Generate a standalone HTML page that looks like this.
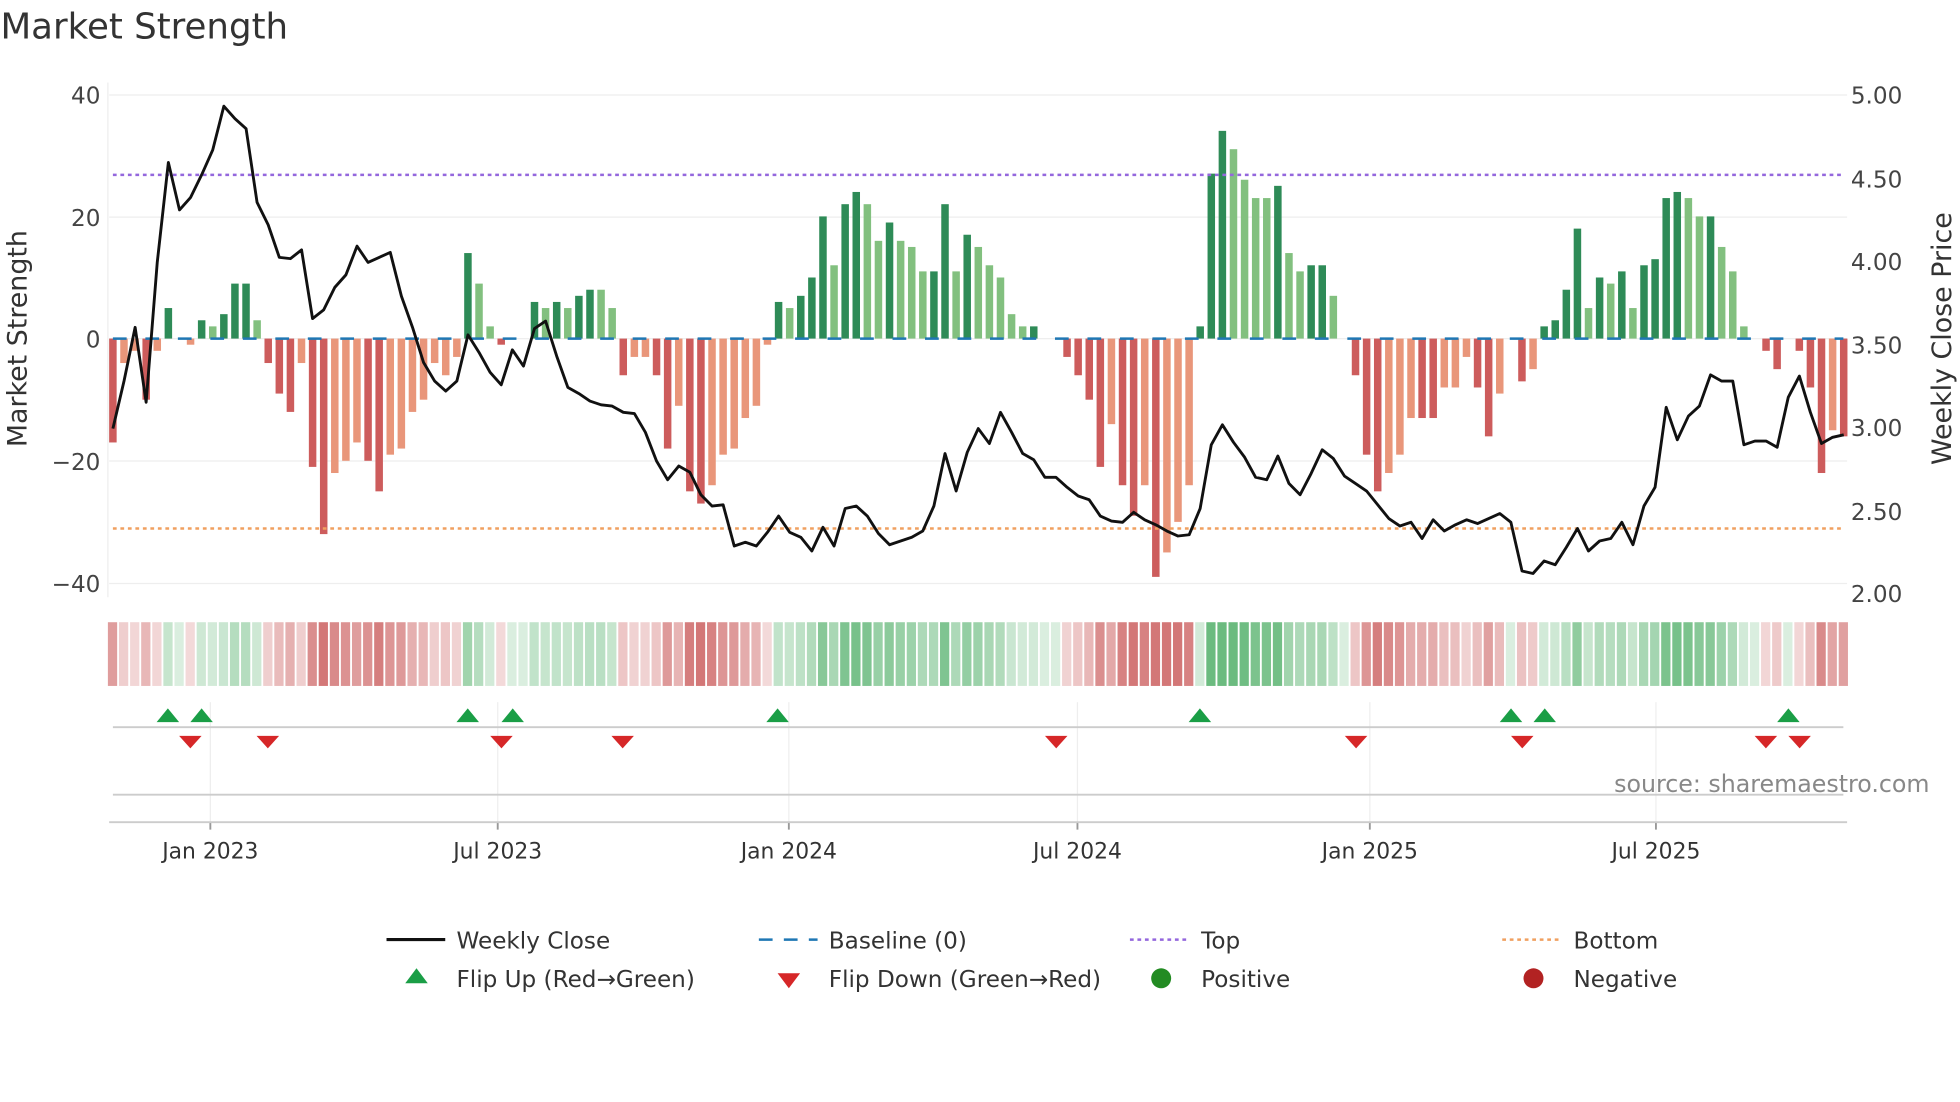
<!DOCTYPE html>
<html><head><meta charset="utf-8"><style>
html,body{margin:0;padding:0;background:#fff;}
svg{display:block;font-family:"DejaVu Sans","Liberation Sans",sans-serif;}
</style></head><body>
<svg id="s" width="1960" height="1102" viewBox="0 0 1568 882" xmlns="http://www.w3.org/2000/svg">
<rect width="1568" height="882" fill="#fff"/>
<text x="0" y="31" font-size="28.5" fill="#333">Market Strength</text>
<g id="grid"></g>
<g id="bars"></g>
<g id="heat"></g>
<g id="lines"></g>
<g fill="#444" font-size="18.5">
<text x="80" y="83" text-anchor="end">40</text>
<text x="80" y="181" text-anchor="end">20</text>
<text x="80" y="278" text-anchor="end">0</text>
<text x="80" y="376" text-anchor="end">−20</text>
<text x="80" y="474" text-anchor="end">−40</text>
<text x="1481" y="83">5.00</text>
<text x="1481" y="150">4.50</text>
<text x="1481" y="216">4.00</text>
<text x="1481" y="283">3.50</text>
<text x="1481" y="349">3.00</text>
<text x="1481" y="416">2.50</text>
<text x="1481" y="482">2.00</text>
</g>
<text transform="translate(21,271) rotate(-90)" text-anchor="middle" font-size="21.5" fill="#333">Market Strength</text>
<text transform="translate(1561,271) rotate(-90)" text-anchor="middle" font-size="21.5" fill="#333">Weekly Close Price</text>
<text x="1544" y="634" text-anchor="end" font-size="19" fill="#888">source: sharemaestro.com</text>
<g font-size="17.5" fill="#333" text-anchor="middle">
<text x="168" y="687">Jan 2023</text><text x="398" y="687">Jul 2023</text>
<text x="631" y="687">Jan 2024</text><text x="862" y="687">Jul 2024</text>
<text x="1096" y="687">Jan 2025</text><text x="1325" y="687">Jul 2025</text>
</g>
<g font-size="18.5" fill="#333">
<line x1="309" y1="752" x2="356" y2="752" stroke="#111" stroke-width="2.5"/>
<text x="365" y="759">Weekly Close</text>
<line x1="607" y1="752" x2="654" y2="752" stroke="#1f77b4" stroke-width="2" stroke-dasharray="11,9"/>
<text x="663" y="759">Baseline (0)</text>
<line x1="904" y1="752" x2="951" y2="752" stroke="#9467dd" stroke-width="2" stroke-dasharray="3,3"/>
<text x="961" y="759">Top</text>
<line x1="1202" y1="752" x2="1249" y2="752" stroke="#f0a060" stroke-width="2" stroke-dasharray="3,3"/>
<text x="1259" y="759">Bottom</text>
<path d="M324,787 L333,775 L342,787Z" fill="#1a9e46"/>
<text x="365" y="790">Flip Up (Red→Green)</text>
<path d="M622,779 L631,791 L640,779Z" fill="#d62728"/>
<text x="663" y="790">Flip Down (Green→Red)</text>
<circle cx="929" cy="783" r="8" fill="#228b22"/>
<text x="961" y="790">Positive</text>
<circle cx="1227" cy="783" r="8" fill="#b22222"/>
<text x="1259" y="790">Negative</text>
</g>
</svg>
<script>
var NS="http://www.w3.org/2000/svg";
function el(p,t,a){var e=document.createElementNS(NS,t);for(var k in a)e.setAttribute(k,a[k]);p.appendChild(e);return e;}
var v=[-17,-4,-2,-10,-2,5,0,-1,3,2,4,9,9,3,-4,-9,-12,-4,-21,-32,-22,-20,-17,-20,-25,-19,-18,-12,-10,-4,-6,-3,14,9,2,-1,0,0,6,5,6,5,7,8,8,5,-6,-3,-3,-6,-18,-11,-25,-27,-24,-19,-18,-13,-11,-1,6,5,7,10,20,12,22,24,22,16,19,16,15,11,11,22,11,17,15,12,10,4,2,2,0,0,-3,-6,-10,-21,-14,-24,-29,-24,-39,-35,-30,-24,2,27,34,31,26,23,23,25,14,11,12,12,7,0,-6,-19,-25,-22,-19,-13,-13,-13,-8,-8,-3,-8,-16,-9,0,-7,-5,2,3,8,18,5,10,9,11,5,12,13,23,24,23,20,20,15,11,2,0,-2,-5,0,-2,-8,-22,-15,-16];
var N=v.length,dx=8.88,x0=90;
var dark={};[90,117,134,161,179,188,197,214,223,232,250,259,294,303,374,401,428,446,463,472,499,525,534,552,561,622,640,649,658,676,685,712,747,756,774,827,854,863,872,880,898,907,925,960,969,978,1023,1049,1058,1085,1094,1103,1138,1147,1183,1192,1218,1236,1245,1254,1262,1280,1298,1316,1325,1333,1342,1369,1414,1423,1441,1449,1458,1476].forEach(function(x){dark[Math.round((x-x0)/dx)]=1;});
var g=document.getElementById("grid"),b=document.getElementById("bars"),h=document.getElementById("heat"),L=document.getElementById("lines");
[76,173.8,271,369,467].forEach(function(y){el(g,"line",{x1:87,x2:1478,y1:y,y2:y,stroke:"#eee","stroke-width":1});});
[168,398,631,862,1096,1325].forEach(function(x){el(g,"line",{x1:x,x2:x,y1:562,y2:658,stroke:"#eee","stroke-width":1});el(g,"line",{x1:x,x2:x,y1:658,y2:664,stroke:"#999","stroke-width":1.5});});
el(g,"line",{x1:86,x2:86,y1:66,y2:478,stroke:"#eee"});
el(g,"line",{x1:90,x2:1475,y1:582,y2:582,stroke:"#ccc","stroke-width":1.5});
el(g,"line",{x1:90,x2:1475,y1:636,y2:636,stroke:"#ccc","stroke-width":1.5});
el(g,"line",{x1:87,x2:1478,y1:658,y2:658,stroke:"#ccc","stroke-width":1.5});
for(var i=0;i<N;i++){var x=x0+i*dx,val=v[i],hh=Math.abs(val)*4.89,d=dark[i];
 var c=val>=0?(d?"#2e8b57":"#82c07f"):(d?"#cd5c5c":"#e9967a");
 if(val!=0)el(b,"rect",{x:x-3,y:val>0?271-hh:271,width:6,height:hh,fill:c});
 var a=Math.min(0.8,0.2+Math.abs(val)/45);
 el(h,"rect",{x:x-4,y:498,width:7.4,height:51,fill:val>=0?"rgb(70,170,95)":"rgb(200,85,85)","fill-opacity":a});
}
el(L,"line",{x1:90,x2:1475,y1:271,y2:271,stroke:"#1f77b4","stroke-width":2,"stroke-dasharray":"11,15"});
el(L,"line",{x1:90,x2:1475,y1:140,y2:140,stroke:"#9467dd","stroke-width":2,"stroke-dasharray":"3,3"});
el(L,"line",{x1:90,x2:1475,y1:423,y2:423,stroke:"#f0a060","stroke-width":2,"stroke-dasharray":"3,3"});
var p=[343,305,262,322,210,130,168,158,140,120,85,95,103,162,180,206,207,200,255,248,230,220,197,210,206,202,237,262,290,305,313,305,268,282,298,308,280,293,263,257,285,310,315,321,324,325,330,331,346,369,384,373,378,396,405,404,437,434,437,426,413,426,430,441,422,437,407,405,413,427,436,433,430,425,405,363,393,362,343,355,330,346,363,368,382,382,390,397,400,413,417,418,410,416,420,425,429,428,407,356,340,354,366,382,384,365,387,396,379,360,367,381,387,393,404,415,421,418,431,416,425,420,416,419,415,411,418,457,459,449,452,438,423,441,433,431,418,436,405,390,326,352,333,325,300,305,305,356,353,353,358,318,301,330,355,350,348];
var pts=p.map(function(y,i){return (x0+i*dx).toFixed(1)+","+y}).join(" ");
el(L,"polyline",{points:pts,fill:"none",stroke:"#111","stroke-width":2.3,"stroke-linejoin":"round"});
[134,161,374,410,622,960,1209,1236,1431].forEach(function(x){el(L,"path",{d:"M"+(x-9)+",578 L"+x+",567 L"+(x+9)+",578Z",fill:"#1a9e46"});});
[152,214,401,498,845,1085,1218,1413,1440].forEach(function(x){el(L,"path",{d:"M"+(x-9)+",589 L"+x+",599 L"+(x+9)+",589Z",fill:"#d62728"});});
</script>
</body></html>
